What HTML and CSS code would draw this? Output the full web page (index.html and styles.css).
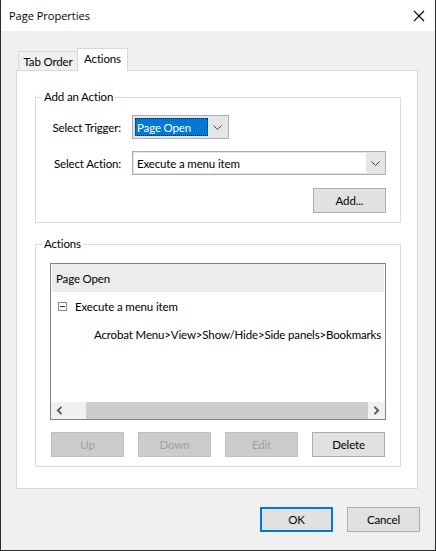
FILE: index.html
```html
<!DOCTYPE html>
<html>
<head>
<meta charset="utf-8">
<link rel="stylesheet" href="styles.css">
</head>
<body>
<div class="window">
  <div class="titlebar">
    <span class="title">Page Properties</span>
    <svg class="close" width="12" height="12" viewBox="0 0 12 12"><path d="M1 1 L11 11 M11 1 L1 11" stroke="#000" stroke-width="1.1" fill="none"/></svg>
  </div>
  <div class="body">
    <div class="tabs">
      <div class="tab inactive">Tab Order</div>
      <div class="tab active">Actions</div>
    </div>
    <div class="panel">
      <fieldset class="group add">
        <legend>Add an Action</legend>
        <div class="row first">
          <span class="label">Select Trigger:</span>
          <div class="select trigger">
            <span class="value selected">Page Open</span>
            <span class="arrow"><svg width="9" height="5" viewBox="0 0 9 5"><path d="M0.5 0.5 L4.5 4.5 L8.5 0.5" stroke="#444" stroke-width="1" fill="none"/></svg></span>
          </div>
        </div>
        <div class="row second">
          <span class="label">Select Action:</span>
          <div class="select action">
            <span class="value field">Execute a menu item</span>
            <span class="arrow"><svg width="9" height="5" viewBox="0 0 9 5"><path d="M0.5 0.5 L4.5 4.5 L8.5 0.5" stroke="#444" stroke-width="1" fill="none"/></svg></span>
          </div>
        </div>
        <div class="addrow">
          <button class="btn">Add...</button>
        </div>
      </fieldset>
      <fieldset class="group actions">
        <legend>Actions</legend>
        <div class="list">
          <div class="list-head">Page Open</div>
          <div class="list-item"><span class="minus"></span>Execute a menu item</div>
          <div class="list-sub">Acrobat Menu&gt;View&gt;Show/Hide&gt;Side panels&gt;Bookmarks</div>
          <div class="list-fill"></div>
          <div class="hscroll">
            <span class="sbtn"><svg width="7" height="9" viewBox="0 0 7 9"><path d="M5.5 0.8 L1.8 4.5 L5.5 8.2" stroke="#555" stroke-width="1.8" fill="none"/></svg></span>
            <span class="thumb"></span>
            <span class="sbtn"><svg width="7" height="9" viewBox="0 0 7 9"><path d="M1.5 0.8 L5.2 4.5 L1.5 8.2" stroke="#555" stroke-width="1.8" fill="none"/></svg></span>
          </div>
        </div>
        <div class="listbtns">
          <button class="btn disabled">Up</button>
          <button class="btn disabled">Down</button>
          <button class="btn disabled">Edit</button>
          <button class="btn">Delete</button>
        </div>
      </fieldset>
    </div>
    <div class="footer">
      <button class="btn default">OK</button>
      <button class="btn">Cancel</button>
    </div>
  </div>
</div>
</body>
</html>
```
FILE: styles.css
```css
body {
  margin: 0;
  font-family: "Lato", "Open Sans", sans-serif;
  font-size: 11.5px;
  letter-spacing: -0.15px;
  color: #000;
  background: #f0f0f0;
}

.window {
  width: 436px;
  height: 551px;
  box-sizing: border-box;
  border: 1px solid #2b2b2b;
  border-top: none;
  background: #f0f0f0;
  display: flex;
  flex-direction: column;
}

.titlebar {
  height: 31px;
  flex: none;
  background: #fff;
  display: flex;
  align-items: center;
  justify-content: space-between;
  padding: 0 10px 0 8px;
}

.title {
  font-family: "Open Sans", sans-serif;
  font-size: 11px;
  letter-spacing: 0;
  color: #000;
}

.close {
  display: block;
}

.body {
  flex: 1;
  padding: 17px 0 0 15px;
}

.tabs {
  display: flex;
  align-items: flex-end;
  height: 23px;
  margin-bottom: -1px;
  padding-left: 2px;
  position: relative;
  z-index: 1;
}

.tab {
  box-sizing: border-box;
  border: 1px solid #d9d9d9;
  border-bottom: none;
  display: flex;
  align-items: center;
  justify-content: center;
}

.tab.inactive {
  width: 59px;
  height: 19px;
  margin-bottom: 1px;
  border-right: none;
  background: #f0f0f0;
  padding-top: 1px;
}

.tab.active {
  width: 51px;
  height: 23px;
  background: #fff;
  padding-bottom: 3px;
}

.panel {
  width: 402px;
  height: 419px;
  box-sizing: border-box;
  border: 1px solid #d9d9d9;
  background: #fff;
  padding-left: 18px;
  overflow: hidden;
}

.group {
  box-sizing: border-box;
  width: 366px;
  margin: 0;
  padding: 0;
  border: 1px solid #dcdcdc;
  min-inline-size: 0;
}

.group legend {
  padding: 0 2px;
  margin-left: 6px;
  line-height: 16px;
}

.group.add {
  margin-top: 18px;
  height: 134px;
}

.group.actions {
  margin-top: 13px;
  height: 231px;
}

.row {
  display: flex;
  align-items: center;
  height: 24px;
}

.row.first {
  margin-top: 10px;
}

.row.second {
  margin-top: 12px;
}

.label {
  width: 85px;
  text-align: right;
  margin-right: 11px;
}

.select {
  box-sizing: border-box;
  height: 24px;
  border: 1px solid #adadad;
  background: #e5e5e5;
  padding: 2px;
  display: flex;
}

.select.trigger {
  width: 97px;
}

.select.action {
  width: 254px;
  padding: 1px;
}

.value {
  display: flex;
  align-items: center;
  box-sizing: border-box;
}

.value.selected {
  width: 73px;
  background: #0078d7;
  color: #fff;
  padding-left: 2px;
  outline: 1px dotted #1a1a1a;
  outline-offset: -1px;
}

.value.field {
  width: 232px;
  background: #fff;
  padding-left: 3px;
}

.arrow {
  flex: 1;
  display: flex;
  align-items: center;
  justify-content: center;
}

.arrow svg {
  display: block;
}

.addrow {
  display: flex;
  justify-content: flex-end;
  margin-top: 13px;
  padding-right: 14px;
}

.btn {
  box-sizing: border-box;
  width: 73px;
  height: 25px;
  border: 1px solid #adadad;
  background: #e1e1e1;
  font-family: inherit;
  font-size: 11.5px;
  letter-spacing: -0.15px;
  color: #000;
  padding: 0;
  margin: 0;
}

.btn.disabled {
  background: #cccccc;
  border-color: #bfbfbf;
  color: #a0a0a0;
}

.btn.default {
  border: 2px solid #0078d7;
}

.list {
  box-sizing: border-box;
  width: 336px;
  height: 157px;
  margin: 11px 0 0 14px;
  border: 1px solid #828282;
  padding: 0 1px 0 1px;
  display: flex;
  flex-direction: column;
}

.list-head {
  height: 28px;
  flex: none;
  background: #ececec;
  display: flex;
  align-items: center;
  padding-left: 4px;
}

.list-item {
  height: 28px;
  flex: none;
  display: flex;
  align-items: center;
  padding-left: 6px;
}

.minus {
  box-sizing: border-box;
  width: 9px;
  height: 9px;
  border: 1px solid #8e8e8e;
  margin-right: 8px;
  display: flex;
  align-items: center;
  justify-content: center;
}

.minus::after {
  content: "";
  width: 5px;
  height: 1px;
  background: #333;
}

.list-sub {
  height: 28px;
  flex: none;
  display: flex;
  align-items: center;
  padding-left: 42px;
  white-space: nowrap;
}

.list-fill {
  flex: 1;
}

.hscroll {
  height: 17px;
  flex: none;
  display: flex;
  background: #f0f0f0;
  margin-left: -1px;
  margin-right: -1px;
}

.sbtn {
  width: 17px;
  display: flex;
  align-items: center;
  justify-content: center;
}

.sbtn svg {
  display: block;
}

.thumb {
  flex: 1;
  background: #cdcdcd;
  margin-left: 18px;
}

.listbtns {
  display: flex;
  gap: 14px;
  margin: 12px 0 0 15px;
}

.footer {
  display: flex;
  justify-content: flex-end;
  gap: 14px;
  margin-top: 18px;
  padding-right: 15px;
}
```
